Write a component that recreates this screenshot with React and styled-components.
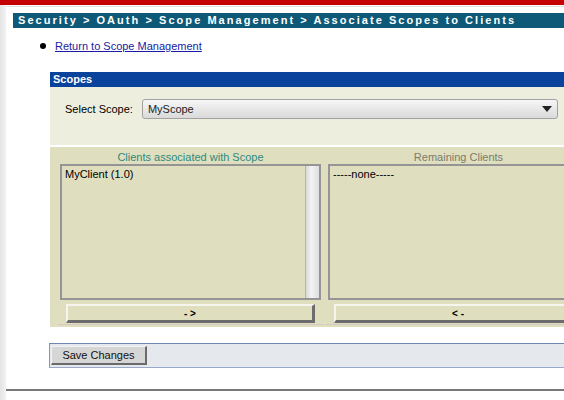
import React from 'react'
import styled, { createGlobalStyle } from 'styled-components'

const GlobalStyle = createGlobalStyle`
  html, body {
    margin: 0;
    padding: 0;
    background: #fff;
    overflow: hidden;
  }
  body {
    font-family: "Liberation Sans", Arial, sans-serif;
    font-size: 11px;
    color: #000;
  }
`

const TopBar = styled.div`
  height: 5px;
  background: #c40000;
`

const Frame = styled.div`
  display: flex;
  min-height: 395px;
`

const LeftStrip = styled.div`
  width: 6px;
  flex: none;
  background: linear-gradient(to right, #e4e4e4, #f2f2f2);
`

const Content = styled.div`
  flex: 1;
  min-width: 0;
  border-top: 1px solid #e2e2e2;
  margin-top: 1px;
  display: flex;
  flex-direction: column;
`

const Breadcrumb = styled.div`
  margin: 6px 0 0 7px;
  height: 15px;
  line-height: 15px;
  background: #0d5977;
  color: #fff;
  font-weight: bold;
  font-size: 11px;
  letter-spacing: 2.05px;
  padding-left: 5px;
  white-space: nowrap;
`

const LinkList = styled.ul`
  margin: 12px 0 0;
  padding-left: 49px;
  list-style: none;
  li {
    height: 13px;
    line-height: 13px;
  }
  li::before {
    content: '';
    display: inline-block;
    width: 6px;
    height: 6px;
    border-radius: 50%;
    background: #000;
    margin: 0 9px 0 -15px;
    vertical-align: 1px;
  }
`

const BackLink = styled.a`
  color: #1a1aa6;
  text-decoration: underline;
  cursor: pointer;
`

const Panel = styled.div`
  margin: 19px 0 0 44px;
  width: 540px;
`

const PanelHeader = styled.div`
  height: 15px;
  line-height: 14px;
  background: #0a439b;
  color: #fff;
  font-weight: bold;
  padding-left: 3px;
`

const SelectRow = styled.div`
  display: flex;
  align-items: center;
  gap: 9px;
  background: #eeeedf;
  padding: 12px 0 26px 15px;
`

const Select = styled.div`
  box-sizing: border-box;
  width: 416px;
  height: 20px;
  border: 1px solid #a2a2a2;
  border-radius: 3px;
  background: linear-gradient(#f6f6f6, #dadada);
  display: flex;
  align-items: center;
  justify-content: space-between;
  padding: 0 5px 0 5px;
  color: #222;
`

const Arrow = styled.span`
  width: 0;
  height: 0;
  border-left: 5px solid transparent;
  border-right: 5px solid transparent;
  border-top: 6px solid #222;
`

const Lists = styled.div`
  margin-top: 2px;
  background: #dfdfc0;
  display: grid;
  grid-template-columns: 261px 261px;
  column-gap: 7px;
  padding: 3px 0 2px 10px;
`

const ColHeading = styled.div`
  text-align: center;
  height: 14px;
  line-height: 14px;
  color: ${p => p.muted ? '#7b7b6b' : '#2b8a7e'};
`

const ListBox = styled.div`
  height: 132px;
  border: 2px solid #959595;
  display: flex;
  justify-content: space-between;
`

const ListItems = styled.div`
  padding: 2px 3px;
`

const Scrollbar = styled.div`
  width: 13px;
  border-left: 1px solid #b4b4b4;
  background: linear-gradient(to right, #d8d8d8, #f3f3f3 40%, #dedede);
`

const ButtonCell = styled.div`
  padding: 4px 9px 1px 8px;
  margin: 0 -3px 0 -2px;
  border-bottom: 1px solid #d8c8c4;
`

const MoveButton = styled.button`
  display: block;
  width: 100%;
  height: 19px;
  background: #dfdfc0;
  border-style: solid;
  border-width: 2px 3px 3px 2px;
  border-color: #f5f5ee #6c6c6c #6c6c6c #f5f5ee;
  font-family: "Liberation Sans", Arial, sans-serif;
  font-size: 10px;
  font-weight: bold;
  padding: 0;
  color: #000;
`

const SaveBar = styled.div`
  box-sizing: border-box;
  margin: 16px 0 0 43px;
  width: 540px;
  height: 25px;
  background: #e5e8ec;
  border-top: 1px solid #7086b2;
  border-left: 1px solid #8395bd;
  border-bottom: 1px solid #98a8c8;
  display: flex;
  align-items: center;
  padding-left: 1px;
`

const SaveButton = styled.button`
  height: 19px;
  width: 96px;
  background: #d6d6d6;
  border-style: solid;
  border-width: 1px 2px 2px 1px;
  border-color: #f2f2f2 #6a6a6a #6a6a6a #f2f2f2;
  font-family: "Liberation Sans", Arial, sans-serif;
  font-size: 11px;
  color: #111;
  padding: 0;
`

const Footer = styled.div`
  margin-top: 21px;
  border-top: 2px solid #787878;
`

export default function App() {
  return (
    <>
      <GlobalStyle />
      <TopBar />
      <Frame>
        <LeftStrip />
        <Content>
          <Breadcrumb>Security &gt; OAuth &gt; Scope Management &gt; Associate Scopes to Clients</Breadcrumb>
          <LinkList>
            <li><BackLink>Return to Scope Management</BackLink></li>
          </LinkList>
          <Panel>
            <PanelHeader>Scopes</PanelHeader>
            <SelectRow>
              <span>Select Scope:</span>
              <Select>
                <span>MyScope</span>
                <Arrow />
              </Select>
            </SelectRow>
            <Lists>
              <ColHeading>Clients associated with Scope</ColHeading>
              <ColHeading muted>Remaining Clients</ColHeading>
              <ListBox>
                <ListItems>MyClient (1.0)</ListItems>
                <Scrollbar />
              </ListBox>
              <ListBox>
                <ListItems>-----none-----</ListItems>
              </ListBox>
              <ButtonCell><MoveButton>- &gt;</MoveButton></ButtonCell>
              <ButtonCell><MoveButton>&lt; -</MoveButton></ButtonCell>
            </Lists>
          </Panel>
          <SaveBar>
            <SaveButton>Save Changes</SaveButton>
          </SaveBar>
          <Footer />
        </Content>
      </Frame>
    </>
  )
}
